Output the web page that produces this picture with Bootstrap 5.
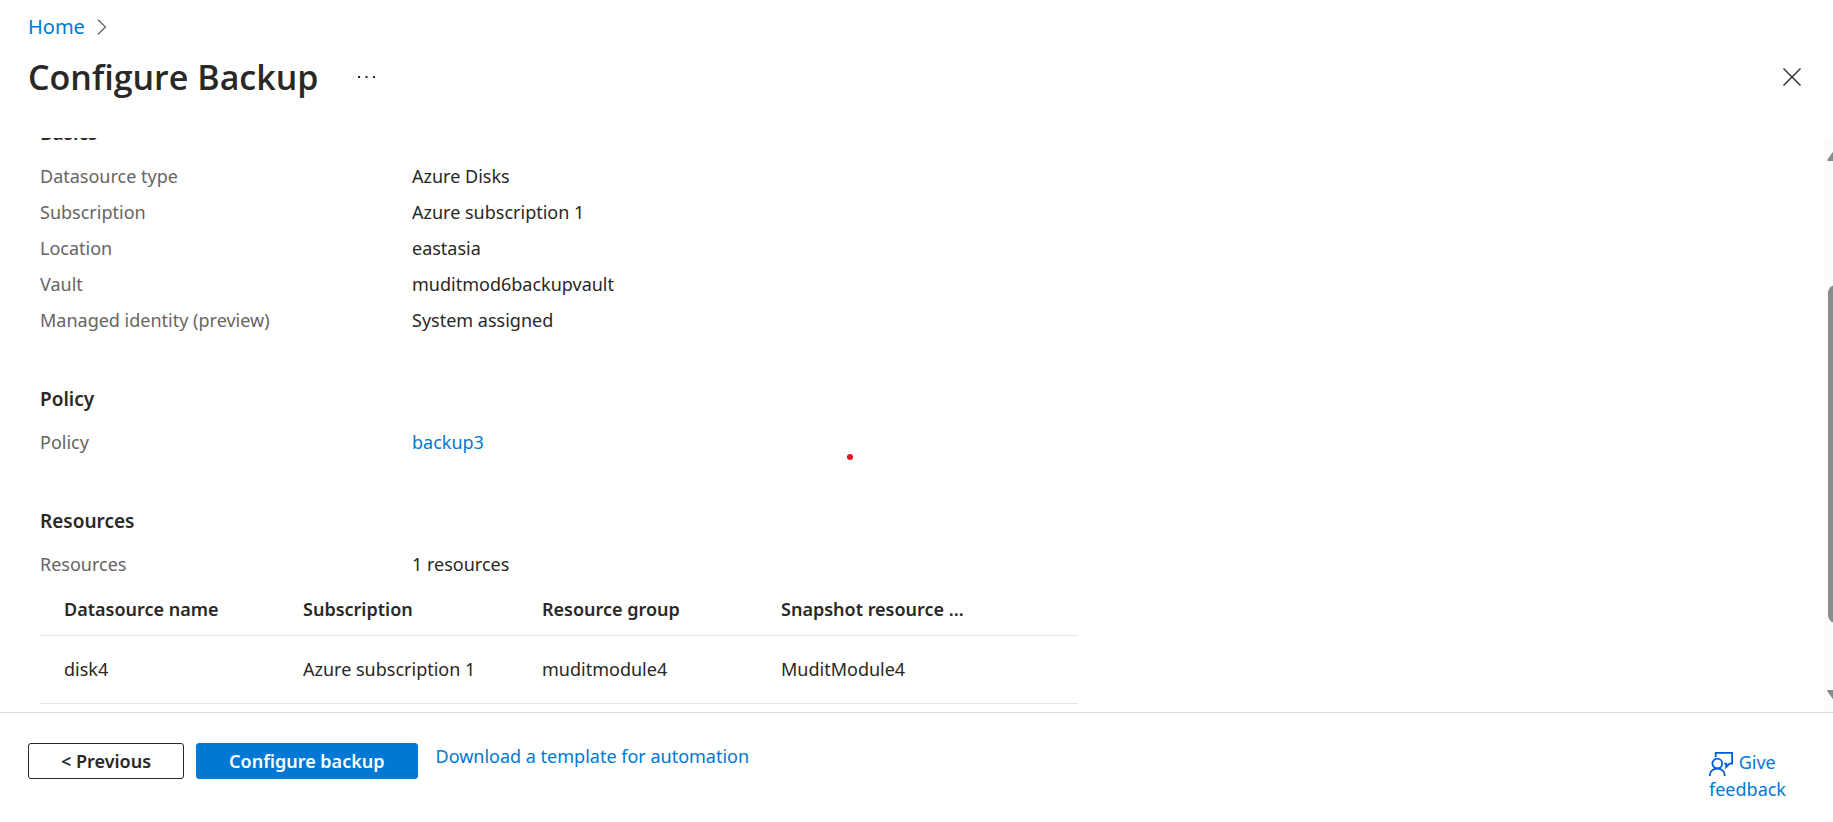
<!DOCTYPE html>
<html lang="en">
<head>
<meta charset="utf-8">
<meta name="viewport" content="width=device-width, initial-scale=1">
<title>Configure Backup</title>
<link href="https://cdn.jsdelivr.net/npm/bootstrap@5.3.0/dist/css/bootstrap.min.css" rel="stylesheet">
<style>
  body { font-family: "Noto Sans", "Open Sans", sans-serif; font-size: 18px; line-height: 26px; color: #292827; background: #fff; }
  a { color: #0078d4; text-decoration: none; }
  a:hover { text-decoration: underline; }
  .blade-head { padding: 14px 28px 0; height: 138px; }
  .crumbs { gap: 12px; font-size: 20px; }
  .blade-title { font-family: "Open Sans", sans-serif; font-size: 34px; line-height: 48px; font-weight: 600; margin: 0; }
  .title-row { margin-top: 13px; }
  .icon-btn { border: 0; background: none; padding: 0; line-height: 0; color: #292827; }
  .more-btn { margin-left: 40px; }
  .close-btn { padding: 4px; }
  .review { margin-top: -18px; padding-left: 40px; }
  .section-title { font-size: 19px; line-height: 26px; font-weight: 600; margin: 0 0 13px; }
  .review section { margin-bottom: 47px; }
  .facts { margin: 0; }
  .facts > div { height: 36px; padding: 4px 0; }
  .facts dt { width: 372px; font-weight: 400; color: #666462; }
  .facts dd { margin: 0; }
  .res-table { width: 1038px; table-layout: fixed; border-collapse: collapse; }
  .res-table th, .res-table td { padding: 0 24px; border-bottom: 1px solid #e6e5e4; white-space: nowrap; overflow: hidden; text-overflow: ellipsis; }
  .res-table th { height: 52px; font-weight: 600; }
  .res-table td { height: 68px; }
  .res-table .col-data { width: 239px; }
  .scroll-rail { width: 10px; background: #fbfbfb; color: #8b8b8b; padding: 13px 0 12px 4px; }
  .scroll-thumb { width: 16px; height: 338px; margin-left: 1px; border-radius: 8px; background: #8b8b8b; }
  .space-above { flex: 13 0 0; }
  .space-below { flex: 7 0 0; }
  .pointer-dot { left: 46.2%; top: 55.1%; width: 6px; height: 6px; background: #e81123; }
  .blade-foot { border-top: 1px solid #dcdcdc; height: 110px; padding: 30px 44px 0 28px; }
  .wiz-btn { height: 36px; padding: 0 32px; line-height: 26px; font-size: 18px; font-weight: 600; border-radius: 3px; border: 1px solid #292827; color: #292827; }
  .wiz-primary { background: #0078d4; border-color: #0078d4; color: #fff; }
  .wiz-gap { gap: 12px; }
  .template-link { margin-left: 6px; }
  .feedback-link { width: 80px; margin-top: 6px; }
  .feedback-link svg { margin-right: 1px; }
</style>
</head>
<body>
<div class="d-flex flex-column vh-100 overflow-hidden">
  <header class="blade-head flex-shrink-0">
    <nav class="crumbs d-flex align-items-center" aria-label="Breadcrumb">
      <a href="#">Home</a>
      <svg width="10" height="16" viewBox="0 0 10 16" fill="none" stroke="#605e5c" stroke-width="1.2" aria-hidden="true"><path d="M1 .8 8.500 8 1 15.200"/></svg>
    </nav>
    <div class="title-row d-flex align-items-center">
      <h1 class="blade-title">Configure Backup</h1>
      <button type="button" class="icon-btn more-btn" aria-label="More">
        <svg width="18" height="4" viewBox="0 0 18 4" fill="currentColor"><path d="M0 1h2v2H0zM7.500 1h2v2h-2zM15 1h2v2h-2z"/></svg>
      </button>
      <button type="button" class="icon-btn close-btn ms-auto" aria-label="Close">
        <svg width="18" height="18" viewBox="0 0 18 18" fill="none" stroke="currentColor" stroke-width="1.400"><path d="M.5.5l17 17M17.500.5l-17 17"/></svg>
      </button>
    </div>
  </header>

  <main class="d-flex flex-grow-1 overflow-hidden position-relative">
    <div class="review flex-grow-1">
      <section>
        <h2 class="section-title">Basics</h2>
        <dl class="facts">
          <div class="d-flex"><dt>Datasource type</dt><dd>Azure Disks</dd></div>
          <div class="d-flex"><dt>Subscription</dt><dd>Azure subscription 1</dd></div>
          <div class="d-flex"><dt>Location</dt><dd>eastasia</dd></div>
          <div class="d-flex"><dt>Vault</dt><dd>muditmod6backupvault</dd></div>
          <div class="d-flex"><dt>Managed identity (preview)</dt><dd>System assigned</dd></div>
        </dl>
      </section>
      <section>
        <h2 class="section-title">Policy</h2>
        <dl class="facts">
          <div class="d-flex"><dt>Policy</dt><dd><a href="#">backup3</a></dd></div>
        </dl>
      </section>
      <section>
        <h2 class="section-title">Resources</h2>
        <dl class="facts">
          <div class="d-flex"><dt>Resources</dt><dd>1 resources</dd></div>
        </dl>
        <table class="res-table">
          <colgroup><col class="col-data"><col class="col-data"><col class="col-data"><col class="col-data"><col></colgroup>
          <thead><tr><th scope="col">Datasource name</th><th scope="col">Subscription</th><th scope="col">Resource group</th><th scope="col">Snapshot resource ...</th><th></th></tr></thead>
          <tbody><tr><td>disk4</td><td>Azure subscription 1</td><td>muditmodule4</td><td>MuditModule4</td><td></td></tr></tbody>
        </table>
      </section>
    </div>
    <div class="scroll-rail d-flex flex-column flex-shrink-0 overflow-hidden" aria-hidden="true">
      <svg class="flex-shrink-0" width="16" height="10" viewBox="0 0 16 10" fill="currentColor"><path d="M8 0 16 10H1Q0 10 .5 8.500L6.500 0z"/></svg>
      <div class="space-above"></div>
      <div class="scroll-thumb flex-shrink-0"></div>
      <div class="space-below"></div>
      <svg class="flex-shrink-0" width="16" height="10" viewBox="0 0 16 10" fill="currentColor"><path d="M8 10 16 0H1Q0 0 .5 1.500L6.500 10z"/></svg>
    </div>
    <span class="pointer-dot position-absolute rounded-circle"></span>
  </main>

  <footer class="blade-foot d-flex align-items-start flex-shrink-0">
    <div class="wiz-gap d-flex align-items-start">
      <button type="button" class="btn wiz-btn">&lt; Previous</button>
      <button type="button" class="btn wiz-btn wiz-primary">Configure backup</button>
      <a href="#" class="template-link">Download a template for automation</a>
    </div>
    <a href="#" class="feedback-link ms-auto"><svg width="24" height="24" viewBox="0 0 24 24" fill="none" stroke="#015cda" stroke-width="1.800" aria-hidden="true"><circle cx="8.300" cy="11.500" r="4.900"/><path d="M.9 24v-1c0-3.600 3.400-6.500 7.400-6.500s7.400 2.900 7.400 6.500v1M6.700 5V.9h16.400v10.800h-2.600L17.200 15v-3.300h-2"/></svg> Give feedback</a>
  </footer>
</div>
<script src="https://cdn.jsdelivr.net/npm/bootstrap@5.3.0/dist/js/bootstrap.bundle.min.js"></script>
</body>
</html>
